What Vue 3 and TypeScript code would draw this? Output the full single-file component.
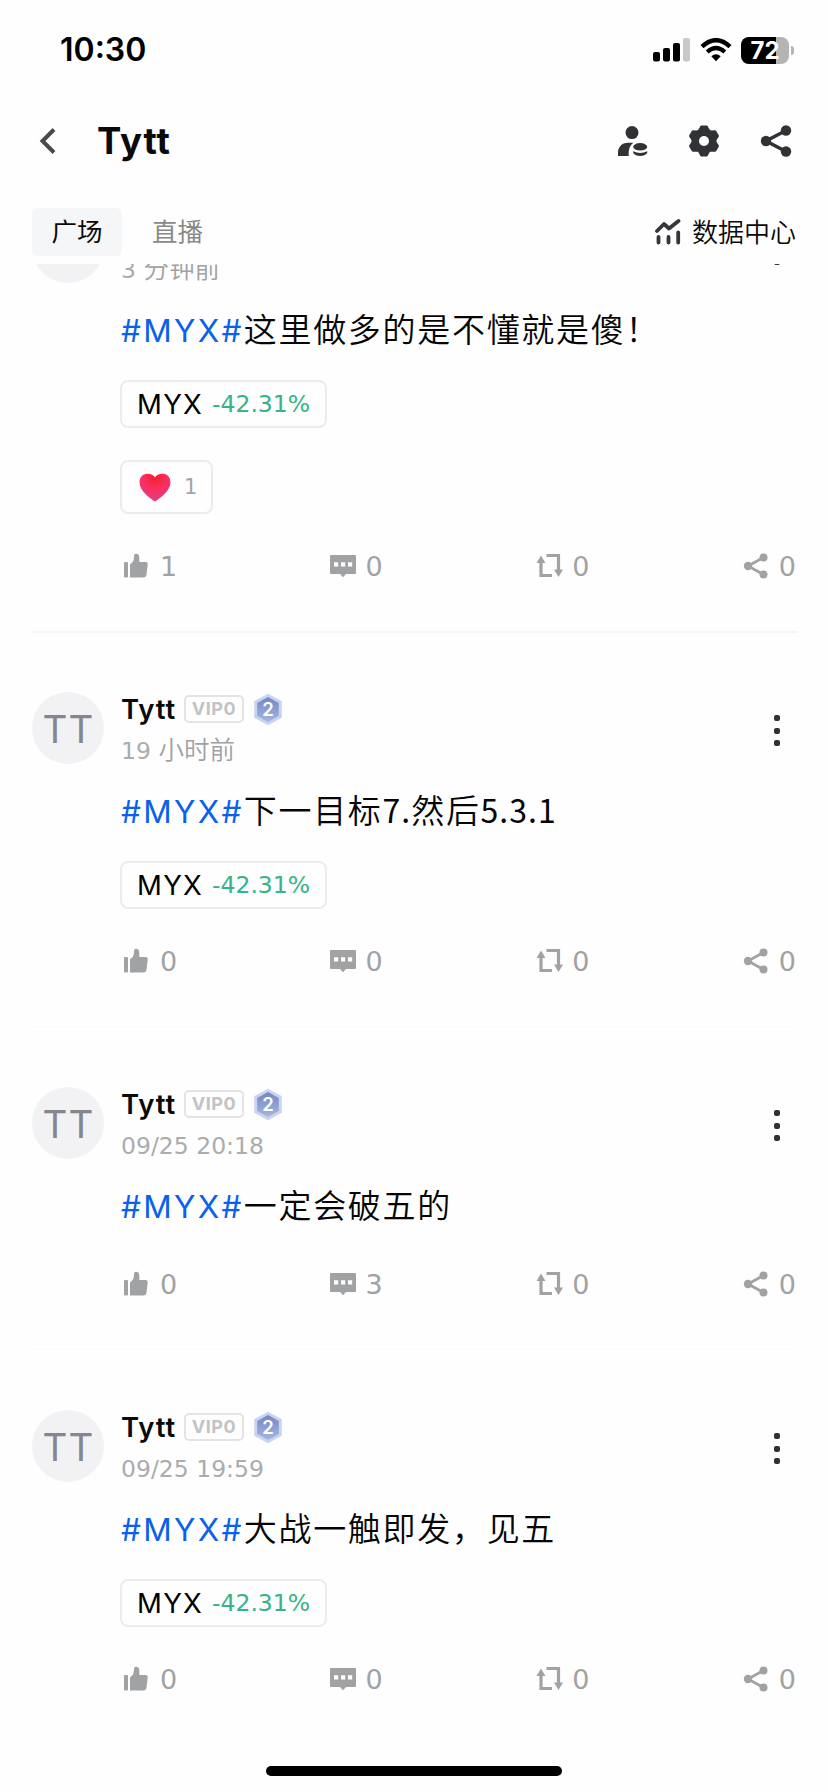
<script setup lang="ts">
interface Post {
  id: number
  time: string
  text: string
  change?: string
  reactions?: number
  likes: number
  comments: number
  reposts: number
  shares: number
}

interface Run {
  value: string
  han: boolean
}

const posts: Post[] = [
  { id: 1, time: '3 分钟前', text: '这里做多的是不懂就是傻！', change: '-42.31%', reactions: 1, likes: 1, comments: 0, reposts: 0, shares: 0 },
  { id: 2, time: '19 小时前', text: '下一目标7.然后5.3.1', change: '-42.31%', likes: 0, comments: 0, reposts: 0, shares: 0 },
  { id: 3, time: '09/25 20:18', text: '一定会破五的', likes: 0, comments: 3, reposts: 0, shares: 0 },
  { id: 4, time: '09/25 19:59', text: '大战一触即发，见五', change: '-42.31%', likes: 0, comments: 0, reposts: 0, shares: 0 },
]

// Splits a string into Han and Latin/digit runs, which are set in different faces.
const runs = (s: string): Run[] =>
  (s.match(/[\x20-\x7e]+|[^\x20-\x7e]+/g) ?? []).map((value) => ({ value, han: value.charCodeAt(0) > 0x7e }))

// One gear outline: six rounded teeth around the centre.
const gear = (() => {
  const p = (r: number, deg: number) => {
    const a = (deg * Math.PI) / 180
    return `${(16 + r * Math.sin(a)).toFixed(2)} ${(16 - r * Math.cos(a)).toFixed(2)}`
  }
  let d = `M${p(14.4, -10)}`
  for (let k = 0; k < 6; k++) {
    const a = k * 60
    d += `L${p(14.4, a + 10)}L${p(11.6, a + 21)}Q${p(10.6, a + 30)} ${p(11.6, a + 39)}L${p(14.4, a + 50)}`
  }
  return d + 'Z'
})()
</script>

<template>
  <div class="screen">
    <div class="status">
      <span class="clock">10:30</span>
      <div class="indicators">
        <svg class="signal" width="38" height="24" viewBox="0 0 38 24">
          <rect x="0" y="14" width="7" height="9.5" rx="2" />
          <rect x="10" y="10" width="7" height="13.5" rx="2" />
          <rect x="20" y="5" width="7" height="18.5" rx="2" />
          <rect x="30" y="0" width="7" height="23.5" rx="2" fill="#c9c9c9" />
        </svg>
        <svg class="wifi" width="32" height="24" viewBox="0 0 32 24">
          <path d="M2 8.600Q16-4.200 30 8.600" fill="none" stroke="#000" stroke-width="4.400" />
          <path d="M7.200 14Q16 6 24.800 14" fill="none" stroke="#000" stroke-width="4.200" />
          <path d="M11.300 18.300Q16 14.400 20.700 18.300L16 23.200Z" />
        </svg>
        <div class="battery"><div class="level"></div><span>72</span></div>
        <div class="nub"></div>
      </div>
    </div>

    <header class="nav">
      <svg class="back" width="18" height="28" viewBox="0 0 18 28">
        <path d="M16 2.500L4.500 14L16 25.500" fill="none" stroke="#4a4a4c" stroke-width="4" />
      </svg>
      <h1>Tytt</h1>
      <div class="tools">
        <svg width="32" height="32" viewBox="0 0 32 32" fill="#303236">
          <circle cx="16" cy="7.600" r="6.500" />
          <path d="M2 31V27C2.500 21 7 17.800 12 17.800H17.500C13.800 20.500 12.200 25 12.800 31Z" />
          <ellipse cx="24.200" cy="21.800" rx="7" ry="3.700" />
          <path d="M17.200 26.200Q24.200 29.600 31.200 26.200V28Q29 31 24.200 31T17.200 28Z" />
        </svg>
        <svg width="32" height="32" viewBox="0 0 32 32" fill="#303236">
          <path :d="gear" stroke="#303236" stroke-width="2.800" stroke-linejoin="round" />
          <circle cx="16" cy="16" r="5" fill="#fff" />
        </svg>
        <svg width="32" height="32" viewBox="0 0 32 32" fill="#303236">
          <path d="M26 5.500L6 16L26 26.500" fill="none" stroke="#303236" stroke-width="3.600" />
          <circle cx="26" cy="5.500" r="5.200" /><circle cx="6" cy="16" r="5.200" /><circle cx="26" cy="26.500" r="5.200" />
        </svg>
      </div>
    </header>

    <nav class="tabs">
      <span class="tab active">广场</span>
      <span class="tab">直播</span>
      <div class="data">
        <svg width="26" height="26" viewBox="0 0 26 26" fill="none" stroke="#34363a" stroke-width="3.800">
          <path d="M2 12L9 5L14 9.500L23.500 2" stroke-linejoin="round" stroke-linecap="round" />
          <path d="M3.500 18V23.600M13.500 18V23.600M23.200 13.500V23.600" stroke-linecap="round" />
        </svg>
        <span>数据中心</span>
      </div>
    </nav>

    <main class="feed">
      <article v-for="post in posts" :key="post.id" class="post">
        <div class="avatar">TT</div>
        <div class="content">
          <div class="head">
            <div class="who">
              <div class="name-row">
                <strong>Tytt</strong>
                <span class="vip">VIP0</span>
                <svg class="badge" width="30" height="33" viewBox="0 0 30 33">
                  <defs>
                    <linearGradient :id="'lv' + post.id" x1="0" y1="0" x2="0" y2="1">
                      <stop offset="0" stop-color="#7288c4" /><stop offset="1" stop-color="#a5b6df" />
                    </linearGradient>
                  </defs>
                  <path d="M15 .8L28.800 8.300V24.700L15 32.200L1.200 24.700V8.300Z" fill="#c9d4f2" />
                  <path d="M15 4L25.800 10V23L15 29L4.200 23V10Z" :fill="'url(#lv' + post.id + ')'" />
                  <text x="15" y="23" text-anchor="middle">2</text>
                </svg>
              </div>
              <div class="time"><span v-for="(r, i) in runs(post.time)" :key="i" :class="{ han: r.han }">{{ r.value }}</span></div>
            </div>
            <div class="more"><i></i><i></i><i></i></div>
          </div>
          <p class="text"><a>#MYX#</a><span v-for="(r, i) in runs(post.text)" :key="i" :class="r.han ? 'han' : 'num'">{{ r.value }}</span></p>
          <div v-if="post.change" class="chip"><b>MYX</b><span>{{ post.change }}</span></div>
          <div v-if="post.reactions" class="reaction">
            <svg width="32" height="29" viewBox="0 0 32 29">
              <defs>
                <radialGradient id="heart" cx=".5" cy=".15" r=".8">
                  <stop offset="0" stop-color="#f5202c" /><stop offset=".45" stop-color="#fa2e5c" /><stop offset="1" stop-color="#e83a85" />
                </radialGradient>
              </defs>
              <path d="M16 4.500C18.500-.8 31.500-1.600 31.500 9.500C31.500 17 22 25 16 28.500C10 25 .5 17 .5 9.500C.5-1.600 13.500-.8 16 4.500Z" fill="url(#heart)" />
            </svg>
            <span>{{ post.reactions }}</span>
          </div>
          <div class="actions">
            <div class="action like">
              <svg width="28" height="28" viewBox="0 0 28 28">
                <rect x="2" y="10" width="4" height="15.500" rx="1" />
                <path d="M8 25.500V12.500L11 9.500Q12 8 12 4Q12 1.800 14 1.800Q17.300 1.800 17.300 6V10H23.500Q26 10 25.700 12.500L24.500 22.500Q24 25.500 21.500 25.500Z" />
              </svg>
              <span>{{ post.likes }}</span>
            </div>
            <div class="action">
              <svg width="28" height="28" viewBox="0 0 28 28">
                <path d="M2 3H26Q27 3 27 4V21Q27 22 26 22H17L14 25.200L11 22H2Q1 22 1 21V4Q1 3 2 3Z" />
                <path d="M5 10.200H9.200V14.400H5ZM12 10.200H16.200V14.400H12ZM19 10.200H23.200V14.400H19Z" fill="#fff" />
              </svg>
              <span>{{ post.comments }}</span>
            </div>
            <div class="action">
              <svg width="28" height="28" viewBox="0 0 28 28">
                <path d="M6 9V23.500H17M11.500 3.500H23.500V19" fill="none" stroke="#a0a2a4" stroke-width="3.200" />
                <path d="M1.500 11L6 3.500L10.500 11ZM19 17.500L23.500 25L28 17.500Z" />
              </svg>
              <span>{{ post.reposts }}</span>
            </div>
            <div class="action">
              <svg width="28" height="28" viewBox="0 0 28 28">
                <path d="M21.500 5.500L6 14L21.500 22.500" fill="none" stroke="#a0a2a4" stroke-width="2.800" />
                <circle cx="21.500" cy="5.500" r="4" /><circle cx="6" cy="14" r="4.200" /><circle cx="21.500" cy="22.500" r="4" />
              </svg>
              <span>{{ post.shares }}</span>
            </div>
          </div>
        </div>
      </article>
    </main>
    <div class="home"></div>
  </div>
</template>

<style>
body { background: #fefefe; }
</style>

<style scoped>
.screen {
  position: relative;
  box-sizing: border-box;
  width: 828px;
  height: 1792px;
  overflow: hidden;
  background: #fefefe;
  color: #0a0a0a;
  font-family: Inter, "Noto Sans CJK SC", sans-serif;
  display: flex;
  flex-direction: column;
}
svg { display: block; flex: none; }

.status {
  height: 100px;
  flex: none;
  display: flex;
  align-items: center;
  justify-content: space-between;
  box-sizing: border-box;
  padding: 0 34px 0 60px;
}
.clock { font-size: 32px; font-weight: 600; line-height: 40px; color: #000; }
.indicators { display: flex; align-items: center; }
.wifi { margin-left: 9px; }
.battery {
  margin-left: 9px;
  width: 48px;
  height: 27px;
  border-radius: 8px;
  background: #b4b4b4;
  position: relative;
  overflow: hidden;
  display: flex;
  justify-content: center;
}
.level { position: absolute; inset: 0 13px 0 0; background: #000; }
.battery span { position: relative; color: #fff; font-size: 24px; line-height: 27px; font-weight: 700; }
.nub { width: 3px; height: 9px; margin-left: 2px; border-radius: 0 4px 4px 0; background: #b4b4b4; }

.nav {
  height: 82px;
  flex: none;
  display: flex;
  align-items: center;
  padding: 0 36px 0 38px;
}
h1 { margin: 0 0 0 41px; font-size: 36.500px; line-height: 44px; font-weight: 700; letter-spacing: .9px; }
.tools { margin-left: auto; display: flex; gap: 40px; }

.tabs {
  height: 82px;
  flex: none;
  box-sizing: border-box;
  display: flex;
  align-items: flex-start;
  padding: 26px 32px 0;
}
.tab { height: 48px; line-height: 48px; font-size: 25.500px; color: #87898b; padding: 0 20px; }
.tab.active { background: #f5f6f8; border-radius: 6px; color: #0a0a0a; padding: 0 19.500px; margin-right: 10px; }
.data {
  margin-left: auto;
  height: 48px;
  display: flex;
  align-items: center;
  gap: 11px;
  font-family: "Noto Sans CJK SC", sans-serif;
  font-size: 26px;
  font-weight: 350;
}
.data span { line-height: 40px; margin-top: -3px; }

.feed { flex: 1; overflow: hidden; }
.post {
  display: flex;
  margin: 0 31px 0 32px;
  padding: 60px 0 51px;
  border-top: 1px solid #fafafa;
}
.post:first-child { margin-top: -114px; }
.post:nth-child(2) { border-top: 2px solid #f6f6f6; padding-top: 59px; }
.avatar {
  width: 72px;
  height: 72px;
  flex: none;
  border-radius: 50%;
  background: #f2f2f5;
  color: #85878d;
  font-size: 38.500px;
  font-weight: 400;
  line-height: 74px;
  letter-spacing: 1.200px;
  text-indent: 1.200px;
  text-align: center;
}
.content { flex: 1; margin-left: 16px; }
.head { display: flex; justify-content: space-between; height: 94px; }
.name-row { display: flex; align-items: center; height: 34px; }
strong { font-size: 27.500px; font-weight: 600; line-height: 34px; margin-left: 1px; width: 56px; letter-spacing: .9px; }
.vip {
  box-sizing: border-box;
  width: 60px;
  height: 28px;
  margin-left: 7px;
  border: 2px solid #e4e4e5;
  border-radius: 5px;
  color: #c2c3c4;
  font-size: 18px;
  font-weight: 700;
  line-height: 24px;
  letter-spacing: .6px;
  text-align: center;
}
.badge { margin-left: 9px; }
.badge text { font: 600 18.500px Inter, sans-serif; fill: #fff; }
.time {
  margin: 8px 0 0 1px;
  color: #aaacae;
  font-family: "DejaVu Sans", sans-serif;
  font-size: 23.500px;
  line-height: 34px;
  height: 34px;
  white-space: pre;
}
.time .han {
  font-family: "Noto Sans CJK SC", sans-serif;
  font-size: 25.500px;
  font-weight: 350;
  line-height: 1px;
  color: #a0a2a4;
}
.more { width: 6px; margin-right: 17px; padding-top: 23px; display: flex; flex-direction: column; gap: 6.500px; }
.more i { width: 6px; height: 6px; border-radius: 2px; background: #2f3134; }
.text {
  margin: 0 0 0 1px;
  height: 51px;
  line-height: 47px;
  font-family: "Noto Sans CJK SC", sans-serif;
  font-size: 33px;
  font-weight: 350;
  white-space: nowrap;
  color: #050505;
}
.text a { color: #0a62ec; font-family: Inter, sans-serif; font-size: 31.500px; font-weight: 400; letter-spacing: 2.300px; }
.text .han { letter-spacing: 1.700px; }
.text .num { font-family: "Noto Sans CJK SC", sans-serif; font-weight: 400; font-size: 32px; letter-spacing: 1px; }
.chip, .reaction {
  box-sizing: border-box;
  display: flex;
  align-items: center;
  border: 2px solid #ececed;
  border-radius: 8px;
}
.chip { width: 207px; height: 48px; margin-top: 24px; padding-left: 15px; }
.chip b { font-size: 27.500px; font-weight: 400; width: 75px; letter-spacing: 1.300px; color: #000; }
.chip span { color: #35b585; font-family: "DejaVu Sans", sans-serif; font-size: 23.500px; }
.reaction { width: 93px; height: 54px; margin-top: 32px; padding-left: 17px; gap: 13px; }
.reaction span { color: #a2a4a6; font-family: "DejaVu Sans", sans-serif; font-size: 21px; }
.actions { display: flex; justify-content: space-between; margin: 38px 1px 0 2px; }
.action { display: flex; align-items: center; gap: 9px; height: 28px; color: #a0a2a4; font-family: "DejaVu Sans", sans-serif; font-size: 27px; }
.like { gap: 10px; margin-right: -1px; }
.action svg { fill: #a0a2a4; }

.home { position: absolute; left: 266px; top: 1766px; width: 296px; height: 10px; border-radius: 5px; background: #000; }
</style>
